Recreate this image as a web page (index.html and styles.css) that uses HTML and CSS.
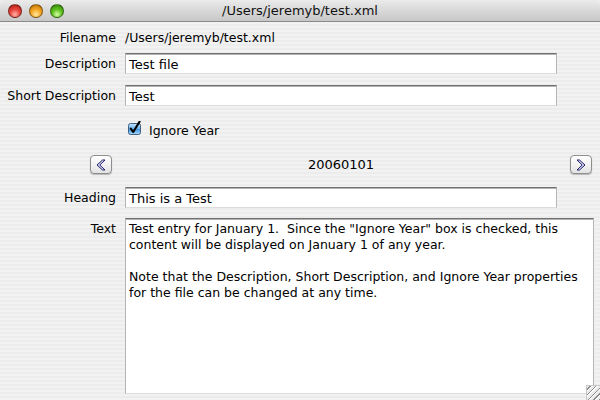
FILE: index.html
```html
<!DOCTYPE html>
<html>
<head>
<meta charset="utf-8">
<link rel="stylesheet" href="styles.css">
</head>
<body>
<div class="window">
  <div class="titlebar">
    <div class="lights">
      <span class="light red"></span>
      <span class="light yellow"></span>
      <span class="light green"></span>
    </div>
    <div class="title">/Users/jeremyb/test.xml</div>
  </div>
  <div class="content">
    <div class="row r-filename">
      <div class="label">Filename</div>
      <div class="value">/Users/jeremyb/test.xml</div>
    </div>
    <div class="row r-desc">
      <div class="label">Description</div>
      <div class="field">Test file</div>
    </div>
    <div class="row r-short">
      <div class="label">Short Description</div>
      <div class="field">Test</div>
    </div>
    <div class="row r-check">
      <div class="label"></div>
      <div class="check">
        <svg class="checkbox" width="13" height="14" viewBox="0 0 13 14">
          <defs>
            <linearGradient id="cb" x1="0" y1="0" x2="0" y2="1">
              <stop offset="0" stop-color="#c9e6fb"/>
              <stop offset="0.45" stop-color="#6fb4ec"/>
              <stop offset="0.55" stop-color="#4a98e0"/>
              <stop offset="1" stop-color="#a9dcfb"/>
            </linearGradient>
          </defs>
          <rect x="0.5" y="2.5" width="12" height="11" rx="2" fill="url(#cb)" stroke="#3f5f86"/>
          <path d="M2.8 7.6 L5.2 11 L11.6 0.6" fill="none" stroke="#000" stroke-width="2.1" stroke-linecap="round" stroke-linejoin="round"/>
        </svg>
        <span>Ignore Year</span>
      </div>
    </div>
    <div class="nav">
      <div class="navbtn">
        <svg width="12" height="12" viewBox="0 0 12 12">
          <path d="M7.5 1 L2 6 L7.5 11 L10 11 L4.8 6 L10 1 Z" fill="#d9d9f4" stroke="#1f1f6a" stroke-width="1" stroke-linejoin="miter"/>
        </svg>
      </div>
      <div class="date">20060101</div>
      <div class="navbtn">
        <svg width="12" height="12" viewBox="0 0 12 12">
          <path d="M4.5 1 L10 6 L4.5 11 L2 11 L7.2 6 L2 1 Z" fill="#d9d9f4" stroke="#1f1f6a" stroke-width="1" stroke-linejoin="miter"/>
        </svg>
      </div>
    </div>
    <div class="row r-heading">
      <div class="label">Heading</div>
      <div class="field">This is a Test</div>
    </div>
    <div class="row r-text">
      <div class="label">Text</div>
      <div class="textarea">Test entry for January 1.  Since the "Ignore Year" box is checked, this
content will be displayed on January 1 of any year.

Note that the Description, Short Description, and Ignore Year properties
for the file can be changed at any time.</div>
    </div>
  </div>
  <div class="grip"></div>
</div>
</body>
</html>
```
FILE: styles.css
```css
html, body {
  margin: 0;
  padding: 0;
  width: 600px;
  height: 400px;
  overflow: hidden;
}
body {
  font-family: "DejaVu Sans", "Noto Sans", sans-serif;
  font-size: 12.5px;
  color: #000;
  background: #ececec;
}
.window {
  position: relative;
  width: 600px;
  height: 400px;
  overflow: hidden;
  border-radius: 5px 5px 0 0;
  background: repeating-linear-gradient(to bottom, #ececec 0, #ececec 2px, #f2f2f2 2px, #f2f2f2 4px);
}
.titlebar {
  height: 21px;
  display: flex;
  align-items: center;
  background: linear-gradient(to bottom, #ebebeb 0%, #d8d8d8 50%, #c8c8c8 100%);
  border-bottom: 1px solid #8a8a8a;
  border-radius: 5px 5px 0 0;
  position: relative;
}
.lights {
  display: flex;
  gap: 7px;
  padding-left: 8px;
  padding-top: 1px;
}
.light {
  width: 14px;
  height: 14px;
  border-radius: 50%;
  box-sizing: border-box;
  border: 1px solid rgba(0,0,0,0.4);
}
.red { background: radial-gradient(circle at 50% 78%, #ffb3a8 0%, #e8463d 45%, #a6180f 100%); }
.yellow { background: radial-gradient(circle at 50% 78%, #ffe9a0 0%, #f5a623 45%, #b16a05 100%); }
.green { background: radial-gradient(circle at 50% 78%, #d6ffa8 0%, #5fc11e 45%, #2e7d0a 100%); }
.title {
  flex: 1;
  text-align: center;
  font-size: 13px;
  margin-right: 64px;
  color: #111;
}
.content {
  display: flex;
  flex-direction: column;
}
.row {
  display: flex;
  align-items: center;
}
.label {
  width: 116px;
  text-align: right;
  flex: none;
  margin-right: 9px;
}
.r-filename { margin-top: 6px; height: 18px; }
.r-desc { margin-top: 7px; }
.r-short { margin-top: 11px; }
.r-check { margin-top: 16px; height: 16px; }
.r-heading { margin-top: 13px; }
.r-text { margin-top: 10px; align-items: flex-start; }
.r-text .label { padding-top: 3px; }
.field {
  width: 432px;
  height: 21px;
  box-sizing: border-box;
  background: #fff;
  border-top: 1px solid #707070;
  border-left: 1px solid #b5b5b5;
  border-right: 1px solid #b5b5b5;
  border-bottom: 1px solid #dcdcdc;
  box-shadow: inset 0 1px 0 #b3b3b3;
  padding: 2px 3px 0;
  font-size: 13px;
  line-height: 17px;
}
.check {
  display: flex;
  align-items: center;
  gap: 8px;
  padding-left: 3px;
}
.checkbox { flex: none; margin-top: -4px; }
.nav {
  display: flex;
  align-items: center;
  margin-top: 17px;
  padding-left: 90px;
  height: 19px;
}
.navbtn {
  width: 22px;
  height: 19px;
  box-sizing: border-box;
  border: 1px solid #8e8e8e;
  border-radius: 4px;
  background: linear-gradient(to bottom, #ffffff 0%, #f3f3f3 50%, #e2e2e2 100%);
  box-shadow: 0 1px 1px rgba(0,0,0,0.25);
  display: flex;
  align-items: center;
  justify-content: center;
}
.date {
  width: 458px;
  text-align: center;
  font-size: 13px;
}
.textarea {
  width: 469px;
  height: 176px;
  box-sizing: border-box;
  background: #fff;
  border-top: 1px solid #707070;
  border-left: 1px solid #b5b5b5;
  border-right: 1px solid #b5b5b5;
  border-bottom: 1px solid #dcdcdc;
  box-shadow: inset 0 1px 0 #b3b3b3;
  padding: 2px 2px 0 3px;
  font-size: 12.5px;
  line-height: 16px;
  white-space: pre;
  overflow: hidden;
}
.grip {
  position: absolute;
  right: 0;
  bottom: 0;
  width: 14px;
  height: 15px;
  box-sizing: border-box;
  border-top: 1px solid #c8c8c8;
  border-left: 1px solid #c8c8c8;
  background: repeating-linear-gradient(135deg, #ececec 0, #ececec 2px, #8a8a8a 2px, #8a8a8a 3px, #ffffff 3px, #ffffff 4px);
}
```
